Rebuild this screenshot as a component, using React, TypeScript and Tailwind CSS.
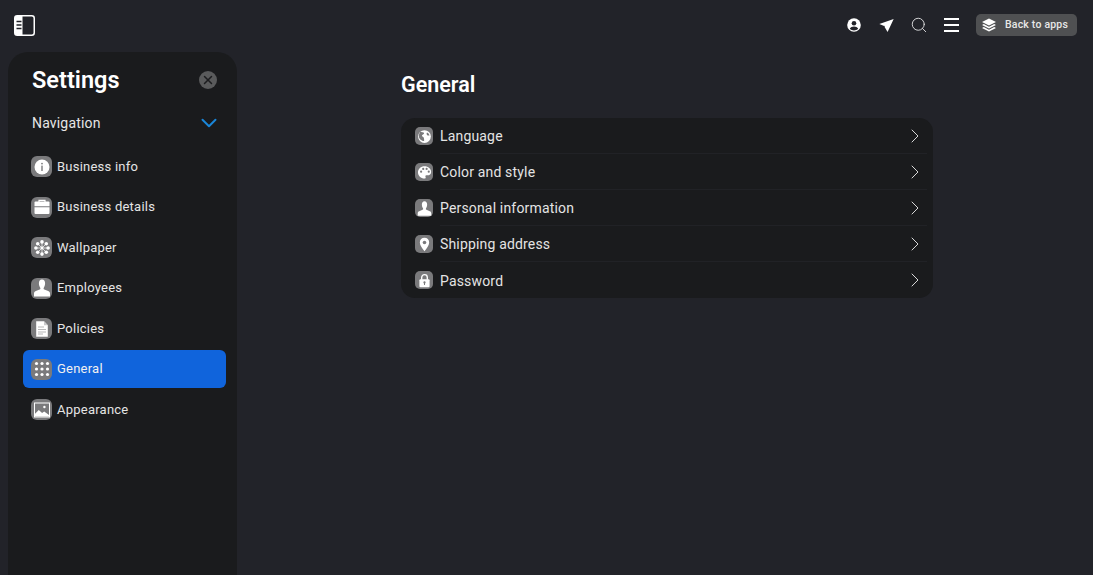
import { ChevronDown, ChevronRight, Search, X } from "lucide-react";
import type { ReactNode } from "react";

const glyphs: Record<string, ReactNode> = {
  info: (
    <>
      <circle cx="10" cy="10" r="7.500" fill="#fff" />
      <rect x="9.300" y="8.600" width="1.400" height="5.400" fill="#7a7a7c" />
      <circle cx="10" cy="6.600" r="0.900" fill="#7a7a7c" />
    </>
  ),
  briefcase: (
    <>
      <path d="M7 5V3.300h6V5" fill="none" stroke="#fff" strokeWidth="1.200" />
      <path d="M2.500 5.500a1 1 0 0 1 1-1h13a1 1 0 0 1 1 1V9.200h-15z" fill="#fff" />
      <path d="M2.500 10.300h15v5.700a1 1 0 0 1-1 1h-13a1 1 0 0 1-1-1z" fill="#fff" />
    </>
  ),
  flower: (
    <>
      <path d="M10 5v10M5 10h10M6.500 6.500l7 7M13.500 6.500l-7 7" stroke="#fff" strokeWidth="0.700" />
      <circle cx="10" cy="10" r="1.400" fill="#fff" />
      <circle cx="10" cy="3.900" r="1.800" fill="#fff" />
      <circle cx="10" cy="16.100" r="1.800" fill="#fff" />
      <circle cx="3.900" cy="10" r="1.800" fill="#fff" />
      <circle cx="16.100" cy="10" r="1.800" fill="#fff" />
      <circle cx="5.700" cy="5.700" r="1.800" fill="#fff" />
      <circle cx="14.300" cy="5.700" r="1.800" fill="#fff" />
      <circle cx="5.700" cy="14.300" r="1.800" fill="#fff" />
      <circle cx="14.300" cy="14.300" r="1.800" fill="#fff" />
    </>
  ),
  person: <path d="M10 1.500c2 0 3.100 1.700 3.100 3.800 0 1.800-.6 3.400-1.300 4.500-.4.700-.2 1.500.5 1.800l3.900 1.500c1.200.5 1.800 1.300 1.800 2.400v3H2v-3c0-1.100.6-1.900 1.800-2.400l3.900-1.500c.7-.3.900-1.100.5-1.800C7.500 8.700 6.900 7.100 6.900 5.300c0-2.100 1.100-3.800 3.100-3.800z" fill="#fff" />,
  doc: (
    <>
      <path d="M4.200 2.300h7.800l3.800 3.900v11.500H4.200z" fill="#fff" />
      <path d="M12 2.300v3.900h3.800" fill="#c9c9ca" />
      <path d="M6 8h6M6 10.500h8M6 13h8M6 15h5" stroke="#a4a4a6" strokeWidth="0.800" />
    </>
  ),
  grid: (
    <g fill="#fff">
      {[4.500, 10, 15.500].flatMap((y) => [4.500, 10, 15.500].map((x) => <circle key={`${x}-${y}`} cx={x} cy={y} r="1.600" />))}
    </g>
  ),
  image: (
    <>
      <rect x="2.500" y="3" width="15" height="14" fill="none" stroke="#fff" strokeWidth="1" />
      <circle cx="12.400" cy="7" r="1.200" fill="#fff" />
      <path d="M3 16.500v-2.800l3.800-3.600 3.300 3 2.100-1.600 4.800 3.400v1.600z" fill="#fff" />
    </>
  ),
  globe: (
    <>
      <circle cx="10" cy="10" r="7.500" fill="#fff" />
      <path d="M5 4.500c1.600.6 3.200.3 4.200 1.200.9.9-.4 1.900-1.300 2.300-.9.4-1.100 1.200-.4 1.900.8.7 1.800.8 1.800 2 0 1 .6 1.900.2 3.400C6 15 3.400 12.600 3.400 9.600c0-2 .6-3.800 1.600-5.100zM13 5.400c1.300.6 2.500 1.800 2.900 3.300-1.200.5-2.500.1-3.100-.9-.5-.8-.4-1.700.2-2.400z" fill="#7a7a7c" />
    </>
  ),
  palette: (
    <>
      <path d="M10 2.500c4.400 0 7.800 3 7.800 6.800 0 2.600-2 4-4.200 4h-1.400c-1 0-1.500.9-1 1.600.6.900.1 2.300-1.200 2.300-4.300 0-7.700-3.400-7.700-7.400 0-4.100 3.400-7.300 7.700-7.300z" fill="#fff" />
      <circle cx="6" cy="9" r="1.300" fill="#7a7a7c" />
      <circle cx="8.500" cy="5.800" r="1.300" fill="#7a7a7c" />
      <circle cx="12.500" cy="5.800" r="1.300" fill="#7a7a7c" />
      <circle cx="15" cy="9" r="1.300" fill="#7a7a7c" />
    </>
  ),
  pin: (
    <>
      <path d="M10 2c3.200 0 5.500 2.400 5.500 5.500 0 3.500-3.200 7.300-5.500 10.500C7.700 14.800 4.500 11 4.500 7.500 4.500 4.400 6.800 2 10 2z" fill="#fff" />
      <circle cx="10" cy="7.600" r="2.100" fill="#7a7a7c" />
    </>
  ),
  lock: (
    <>
      <path d="M6.700 9V6.400a3.300 3.300 0 0 1 6.600 0V9" fill="none" stroke="#fff" strokeWidth="1.600" />
      <rect x="4" y="8.500" width="12" height="9.500" rx="1.300" fill="#fff" />
      <circle cx="10" cy="12.300" r="1.300" fill="#7a7a7c" />
      <rect x="9.400" y="12.500" width="1.200" height="2.800" fill="#7a7a7c" />
    </>
  ),
};

function AppIcon({ name, small }: { name: string; small?: boolean }) {
  return (
    <span className={`flex shrink-0 items-center justify-center bg-[#7a7a7c] ${small ? "h-[18px] w-[18px] rounded-[5px]" : "h-[21px] w-[21px] rounded-[6px]"}`}>
      <svg viewBox="0 0 20 20" className={small ? "h-[17px] w-[17px]" : "h-[20px] w-[20px]"}>
        {glyphs[name]}
      </svg>
    </span>
  );
}

const navItems = [
  { label: "Business info", icon: "info" },
  { label: "Business details", icon: "briefcase" },
  { label: "Wallpaper", icon: "flower" },
  { label: "Employees", icon: "person" },
  { label: "Policies", icon: "doc" },
  { label: "General", icon: "grid", active: true },
  { label: "Appearance", icon: "image" },
];

const generalItems = [
  { label: "Language", icon: "globe" },
  { label: "Color and style", icon: "palette" },
  { label: "Personal information", icon: "person" },
  { label: "Shipping address", icon: "pin" },
  { label: "Password", icon: "lock" },
];

export default function App() {
  return (
    <div className="flex h-[575px] flex-col overflow-hidden bg-[#222329] font-['Roboto',sans-serif] text-white">
      <header className="flex h-[50px] shrink-0 items-center justify-between pl-[14px] pr-4">
        <svg viewBox="0 0 21 21" className="h-[21px] w-[21px]">
          <rect x="0.750" y="0.750" width="19.500" height="19.500" rx="2.500" fill="none" stroke="#fff" strokeWidth="1.500" />
          <path d="M2.500 1h6v19h-6A1.500 1.500 0 0 1 1 18.500v-16A1.500 1.500 0 0 1 2.500 1z" fill="#fff" />
          <path d="M2.500 6.500h5M2.500 10h5M2.500 13.500h5" stroke="#222329" strokeWidth="1.500" />
        </svg>
        <div className="flex items-center">
          <svg viewBox="0 0 14 14" className="h-[14px] w-[14px]">
            <circle cx="7" cy="7" r="6.800" fill="#fff" />
            <circle cx="7" cy="5.200" r="2.300" fill="#222329" />
            <path d="M2.800 10.800c.8-1.600 2.400-2.400 4.200-2.400s3.400.8 4.200 2.400C10.100 12 8.600 12.500 7 12.500s-3.100-.5-4.200-1.700z" fill="#222329" />
          </svg>
          <svg viewBox="0 0 14 14" className="ml-[18px] h-[15px] w-[15px]">
            <path d="M13.700 1 .3 5.600l4.500 1.800.9-.2-.6.9 2.900 4.900z" fill="#fff" />
          </svg>
          <Search className="ml-[16px] h-[18px] w-[18px] text-[#e4e4e5]" strokeWidth={1.200} />
          <div className="ml-[16px] flex h-[14px] w-[15px] flex-col justify-between">
            <span className="h-[2px] bg-white" />
            <span className="h-[2px] bg-white" />
            <span className="h-[2px] bg-white" />
          </div>
          <button className="ml-[17px] flex h-[22px] w-[101px] items-center rounded-[5px] bg-[#4f5052] pl-[5px] text-[10.500px] font-medium tracking-[0.2px] text-[#e8e8e8]">
            <svg viewBox="0 0 16 16" className="h-[16px] w-[16px]">
              <path d="M8 1.500 15 5 8 8.500 1 5z" fill="#fff" />
              <path d="M2.800 7 1 8l7 3.500L15 8l-1.800-1L8 9.700z" fill="#fff" />
              <path d="M2.800 10 1 11l7 3.500 7-3.500-1.800-1L8 12.700z" fill="#fff" />
            </svg>
            <span className="ml-[8px]">Back to apps</span>
          </button>
        </div>
      </header>

      <div className="mt-[2px] flex min-h-0 flex-1">
        <aside className="ml-2 w-[229px] shrink-0 rounded-t-[20px] bg-[#1a1b1d] px-[15px] pt-4">
          <div className="flex items-center justify-between pl-[9px] pr-[5px]">
            <h1 className="text-[23.500px] font-semibold leading-6">Settings</h1>
            <span className="flex h-[18px] w-[18px] items-center justify-center rounded-full bg-[#5a5b5c]">
              <X className="h-[14px] w-[14px] text-[#1c1d1f]" strokeWidth={2.500} />
            </span>
          </div>
          <div className="mt-[19px] flex h-[24px] items-center justify-between pl-[9px]">
            <span className="text-[14px] tracking-[0.17px] text-[#e6e6e6]">Navigation</span>
            <ChevronDown className="h-[26px] w-[26px] text-[#1a86d8]" strokeWidth={1.800} />
          </div>
          <nav className="mt-[12.500px] flex w-[203px] flex-col gap-[2.500px]">
            {navItems.map((item) => (
              <div key={item.label} className={`flex h-[38px] items-center gap-[5px] rounded-[6px] pl-[8px] text-[13px] tracking-[0.23px] ${item.active ? "bg-[#1064dc] text-[#f0f0f0]" : "text-[#e4e4e4]"}`}>
                <AppIcon name={item.icon} />
                {item.label}
              </div>
            ))}
          </nav>
        </aside>

        <main className="ml-[164px] w-[532px] pt-[19px]">
          <h2 className="text-[21.500px] font-semibold leading-7">General</h2>
          <div className="mt-[19px] rounded-[14px] bg-[#1a1b1d] pl-[14px] pr-[6px]">
            {generalItems.map((item, i) => (
              <div key={item.label} className="flex h-[36px] items-center gap-[7px] text-[14px] tracking-[0.17px] text-[#e4e4e4]">
                <AppIcon name={item.icon} small />
                <div className={`flex h-full flex-1 items-center justify-between ${i < generalItems.length - 1 ? "border-b border-[#212226]" : ""}`}>
                  <span className="pt-[2px]">{item.label}</span>
                  <ChevronRight className="h-[24px] w-[24px] text-[#d8d8d8]" strokeWidth={1} />
                </div>
              </div>
            ))}
          </div>
        </main>
      </div>
    </div>
  );
}
